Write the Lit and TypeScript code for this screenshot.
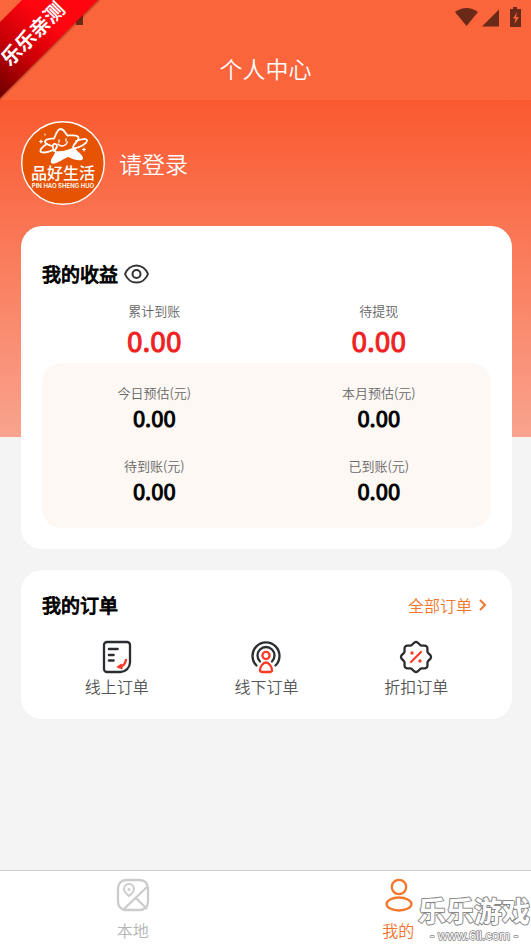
import { LitElement, html, css, svg } from "lit";
import { customElement, property } from "lit/decorators.js";

type Stat = { label: string; value: string };

const totals: Stat[] = [
  { label: "累计到账", value: "0.00" },
  { label: "待提现", value: "0.00" },
];

const estimates: Stat[] = [
  { label: "今日预估(元)", value: "0.00" },
  { label: "本月预估(元)", value: "0.00" },
  { label: "待到账(元)", value: "0.00" },
  { label: "已到账(元)", value: "0.00" },
];

const sealPath = (() => {
  // Eight-lobed seal outline: smooth peaks with shallow notches between them.
  const c = 17;
  const points: string[] = [];
  for (let i = 0; i <= 96; i++) {
    const a = (i / 96) * Math.PI * 2;
    const wave = Math.cos(8 * a);
    const r = 13.8 + 1.2 * wave;
    points.push(`${(c + r * Math.sin(a)).toFixed(2)} ${(c - r * Math.cos(a)).toFixed(2)}`);
  }
  return `M${points.join("L")}Z`;
})();

const icons = {
  online: svg`
    <path d="M7 2h20a3 3 0 0 1 3 3v17.500c0 5-4.500 9.500-9.500 9.500H7a3 3 0 0 1-3-3V5a3 3 0 0 1 3-3Z" fill="none" stroke="#2b2d31" stroke-width="2.300"/>
    <path d="M9 9h8.500M9 15h4.500M9 20.500h4.500" stroke="#2b2d31" stroke-width="2.600" stroke-linecap="round"/>
    <path d="M26 19c0 4-2.500 7-7 8" fill="none" stroke="#ff3b28" stroke-width="2.300"/>
    <path d="m17.500 27 3.500-2.500 1 4Z" fill="#ff3b28" stroke="#ff3b28" stroke-width="1.500" stroke-linejoin="round"/>`,
  offline: svg`
    <g fill="none" stroke-width="2.300" stroke-linecap="round">
      <path d="M7.500 25.500a13.500 13.500 0 1 1 19 0" stroke="#2b2d31"/>
      <path d="M11 21.500a8.500 8.500 0 1 1 12 0" stroke="#2b2d31"/>
      <circle cx="17" cy="15.500" r="3.600" stroke="#ff3b28"/>
      <path d="M17 22.500c3 0 6 4.500 6 7.500 0 1.500-1 2-2.500 2h-7c-1.500 0-2.500-.5-2.500-2 0-3 3-7.500 6-7.500Z" stroke="#ff3b28"/>
    </g>`,
  discount: svg`
    <path d="${sealPath}" fill="none" stroke="#2b2d31" stroke-width="2.300" stroke-linejoin="round"/>
    <path d="m12 22 10-10" stroke="#ff3b28" stroke-width="2.200" stroke-linecap="round"/>
    <circle cx="13" cy="13" r="1.700" fill="#ff3b28"/><circle cx="21" cy="21" r="1.700" fill="#ff3b28"/>`,
};

const orders = [
  { label: "线上订单", icon: icons.online },
  { label: "线下订单", icon: icons.offline },
  { label: "折扣订单", icon: icons.discount },
];

@customElement("stat-grid")
export class StatGrid extends LitElement {
  @property({ attribute: false }) stats: Stat[] = [];
  @property({ type: Boolean, reflect: true }) accent = false;

  static styles = css`
    :host { display: block; }
    .grid {
      display: grid;
      grid-template-columns: 1fr 1fr;
      row-gap: 25px;
      margin: 0;
      text-align: center;
    }
    .label { font-size: 13px; line-height: 20px; color: #666; }
    .value {
      margin: 0;
      font-size: 22px;
      line-height: 28px;
      font-weight: 400;
      color: #000;
      -webkit-text-stroke: 1px currentColor;
    }
    :host([accent]) .value { font-size: 28px; line-height: 38px; color: #ee2222; }
  `;

  render() {
    return html`<dl class="grid">
      ${this.stats.map(
        (s) => html`<div><dt class="label">${s.label}</dt><dd class="value">${s.value}</dd></div>`
      )}
    </dl>`;
  }
}

@customElement("app-root")
export class AppRoot extends LitElement {
  static styles = css`
    :host {
      display: flex;
      flex-direction: column;
      position: relative;
      min-height: 100vh;
      overflow: hidden;
      box-sizing: border-box;
      font-family: "Noto Sans CJK SC", sans-serif;
      font-weight: 350;
      color: #000;
      background: #f4f4f4 linear-gradient(#fa5529, #fa592f 100px, #f9a38e) no-repeat 0 0 / 100% 437px;
    }
    button { border: 0; padding: 0; background: none; font: inherit; color: inherit; cursor: pointer; }
    a { color: inherit; text-decoration: none; }
    svg { display: block; }
    .header { background: #fb653b; height: 100px; }
    .status {
      display: flex;
      justify-content: flex-end;
      height: 38px;
    }
    .page-title {
      margin: 0;
      font-size: 23px;
      line-height: 60px;
      font-weight: 350;
      color: #fff;
      text-align: center;
    }
    .main { flex: 1; padding: 21px 19px 21px 21px; }
    .profile {
      display: flex;
      align-items: center;
      gap: 14px;
      margin-bottom: 21px;
      font-size: 23px;
      color: #fff;
    }
    .card {
      padding: 21px;
      margin-bottom: 21px;
      border-radius: 21px;
      background: #fff;
    }
    .income { padding-top: 32px; }
    .card-head { display: flex; align-items: center; }
    .card-title {
      margin: 0;
      font-size: 19px;
      line-height: 32px;
      font-weight: 400;
      -webkit-text-stroke: 1px currentColor;
    }
    .eye { margin-left: 6px; }
    .totals { margin-top: 11px; margin-bottom: 4px; }
    .panel { padding: 20px 0 24px; border-radius: 20px; background: #fdf8f4; }
    .orders { padding: 19px 21px 21px; }
    .all {
      display: flex;
      align-items: center;
      gap: 7px;
      margin-left: auto;
      font-size: 16px;
      color: #f0772b;
    }
    .order-row { display: grid; grid-template-columns: repeat(3, 1fr); margin-top: 19px; }
    .order {
      display: flex;
      flex-direction: column;
      align-items: center;
      font-size: 16px;
      line-height: 24px;
      color: #555;
    }
    .nav {
      display: grid;
      grid-template-columns: 1fr 1fr;
      border-top: 1px solid #ccc;
      background: #fff;
    }
    .tab {
      display: flex;
      flex-direction: column;
      align-items: center;
      gap: 6px;
      padding: 7px 0 3px;
      font-size: 16px;
      line-height: 24px;
      color: #b4b4b4;
    }
    .tab.active { color: #f0702a; }
    .ribbon { position: absolute; left: 0; top: 0; }
    .watermark { position: absolute; right: 0; bottom: 0; pointer-events: none; }
  `;

  render() {
    return html`
      <header class="header">
        <div class="status">
          <svg width="76" height="38" viewBox="0 0 76 38" fill="#6b2917" aria-hidden="true">
            <path d="M0 12Q11.500 4 23 12L11.500 26Z"/>
            <path d="M44 9.500V26.500H27Z"/>
            <path d="M58 7h4v2h4v18H55V9h3Z"/>
            <path d="M62 12l-4 6.500h2.500L59.500 24l4.500-7h-3Z" fill="#fb653b"/>
          </svg>
        </div>
        <h1 class="page-title">个人中心</h1>
      </header>

      <main class="main">
        <button class="profile">${this.logo()}<span>请登录</span></button>

        <section class="card income">
          <div class="card-head">
            <h2 class="card-title">我的收益</h2>
            <button class="eye" aria-label="显示或隐藏收益">
              <svg width="25" height="20" viewBox="0 0 25 20" fill="none" stroke="#333" stroke-width="2">
                <path d="M1 10C3 5 7.500 1.500 12.500 1.500S22 5 24 10c-2 5-6.500 8.500-11.500 8.500S3 15 1 10Z"/>
                <circle cx="12.500" cy="10" r="4"/>
              </svg>
            </button>
          </div>
          <stat-grid class="totals" accent .stats=${totals}></stat-grid>
          <stat-grid class="panel" .stats=${estimates}></stat-grid>
        </section>

        <section class="card orders">
          <div class="card-head">
            <h2 class="card-title">我的订单</h2>
            <a class="all" href="#orders">全部订单
              <svg width="12" height="14" viewBox="0 0 12 14" fill="none" stroke="currentColor" stroke-width="2"><path d="m1 2 5 5-5 5"/></svg>
            </a>
          </div>
          <div class="order-row">
            ${orders.map(
              (o) => html`<button class="order">
                <svg width="34" height="34" viewBox="0 0 34 34" aria-hidden="true">${o.icon}</svg>
                <span>${o.label}</span>
              </button>`
            )}
          </div>
        </section>
      </main>

      <nav class="nav">
        <a class="tab" href="#local">
          <svg width="34" height="34" viewBox="0 0 34 34" fill="none" stroke="#ccc" stroke-width="2.300">
            <rect x="2" y="2" width="30" height="30" rx="8"/>
            <path d="M8 31 31 9M20 20l11 11"/>
            <path d="M13 18c-3-2.500-5-4.500-5-7a5 5 0 0 1 10 0c0 2.500-2 4.500-5 7Z" stroke-width="2"/>
            <circle cx="13" cy="11.500" r="1.500" fill="#ccc" stroke="none"/>
          </svg>
          <span>本地</span>
        </a>
        <a class="tab active" href="#mine">
          <svg width="34" height="34" viewBox="0 0 34 34" fill="none" stroke="#f0772b" stroke-width="2.300">
            <circle cx="18" cy="9" r="7.200"/>
            <ellipse cx="18" cy="26" rx="12.500" ry="6.500"/>
          </svg>
          <span>我的</span>
        </a>
      </nav>

      ${this.ribbon()} ${this.watermark()}
    `;
  }

  private logo() {
    return html`<svg width="84" height="84" viewBox="0 0 84 84" aria-hidden="true">
      <circle cx="42" cy="42" r="41.300" fill="#e65303" stroke="#fff" stroke-width="1.400"/>
      <g fill="none" stroke="#fff" stroke-width="1.800" stroke-linejoin="round" stroke-linecap="round">
        <path d="M31 25c-4-1-7-2-7-4.500 1-3 5-2.500 9-3 2-3.500 3-9.500 6.500-9.500 4 0 4 4 7 6.500 4 0 11-1 11 2.500 1 3-5 5-5.500 9"/>
        <path d="M26 23c-4 2-8 6-6 8 3 1 8 0 12-2M55 20c5-2 11-3 11-.5 0 3-7 7-13 8M33 30c-1-4-2-4-1-6 1-2 4-1 4 1s-2 3-2 5"/>
        <path d="M38 19v2M45 18v2M37 23c3 3.500 8 2 9.500-2" stroke-width="1.300"/>
        <path d="M20 19v3M18.500 20.500h3M63 27v3M61.500 28.500h3M24 13v1" stroke-width="1.200"/>
      </g>
      <path d="M34 30c7 1 14-1 19-4 2 4 10 8 9 12-2 3-11 0-15-2-5 2-14 9-17 6-1-5 4-7 4-12Z" fill="#fff"/>
      <text x="42" y="58" text-anchor="middle" font-size="16" font-weight="500" fill="#fff">品好生活</text>
      <text x="42" y="67" text-anchor="middle" font-family="Inter, sans-serif" font-size="6" font-weight="600" fill="#fff">PIN HAO SHENG HUO</text>
    </svg>`;
  }

  private ribbon() {
    return html`<svg class="ribbon" width="104" height="104" viewBox="0 0 104 104">
      <defs>
        <linearGradient id="red" gradientUnits="userSpaceOnUse" x1="5" y1="95" x2="60" y2="30">
          <stop offset="0" stop-color="#760000"/><stop offset=".5" stop-color="#c90006"/><stop offset="1" stop-color="#ff0510"/>
        </linearGradient>
        <linearGradient id="shade" gradientUnits="userSpaceOnUse" x1="48" y1="48" x2="51" y2="51">
          <stop offset="0" stop-color="#501000" stop-opacity=".6"/><stop offset="1" stop-color="#501000" stop-opacity="0"/>
        </linearGradient>
      </defs>
      <rect x="76" y="15" width="7" height="10" fill="#6b2917"/>
      <path d="M96 0h6L0 102v-6Z" fill="url(#shade)"/>
      <path d="M22 0h76L0 98V22Z" fill="url(#red)"/>
      <text transform="translate(33 34) rotate(-45)" y="7" text-anchor="middle" font-size="20" font-weight="700" fill="#fff">乐乐亲测</text>
    </svg>`;
  }

  private watermark() {
    return html`<svg class="watermark" width="115" height="50" viewBox="0 0 115 50"
        text-anchor="middle" fill="#fff" stroke="#888" paint-order="stroke" stroke-linejoin="round">
      <text x="58" y="27" font-size="28" font-weight="700" stroke-width="2">乐乐游戏</text>
      <text x="58" y="45" font-family="Liberation Sans, sans-serif" font-size="13" stroke-width="1.500">- www.6ll.com -</text>
    </svg>`;
  }
}
